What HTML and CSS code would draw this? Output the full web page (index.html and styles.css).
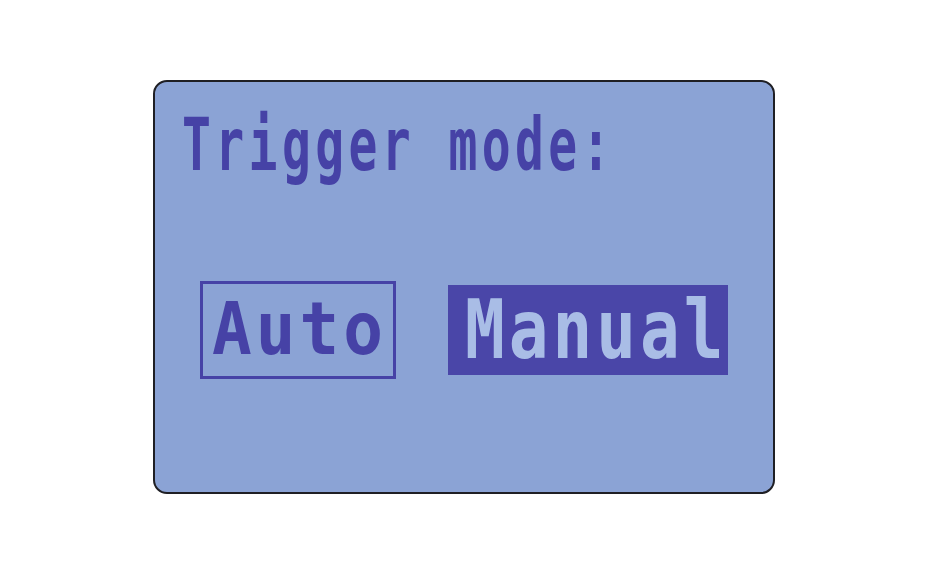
FILE: index.html
```html
<!DOCTYPE html>
<html>
<head>
<meta charset="utf-8">
<link rel="stylesheet" href="styles.css">
</head>
<body>
<div class="stage">
  <div class="lcd">
    <div class="title">Trigger mode:</div>
    <div class="options">
      <div class="opt opt-outline"><span class="opt-text">Auto</span></div>
      <div class="opt opt-selected"><span class="opt-text">Manual</span></div>
    </div>
  </div>
</div>
</body>
</html>
```

FILE: styles.css
```css
html, body {
  margin: 0;
  padding: 0;
  background: #ffffff;
}
.stage {
  width: 950px;
  height: 588px;
  padding: 80px 0 0 153px;
  box-sizing: border-box;
}
.lcd {
  width: 622px;
  height: 414px;
  box-sizing: border-box;
  border: 2px solid #1f1f24;
  border-radius: 14px;
  background: #8ba3d5;
  padding: 0 0 0 27px;
  display: flex;
  flex-direction: column;
}
.title {
  font-family: "DejaVu Sans Mono", monospace;
  font-weight: bold;
  font-size: 48px;
  line-height: 48px;
  letter-spacing: 4.4px;
  color: #4642a6;
  white-space: nowrap;
  transform: scaleY(1.52);
  transform-origin: left top;
  margin-top: 26px;
  height: 48px;
}
.options {
  display: flex;
  align-items: center;
  margin-top: 125px;
  padding-left: 18px;
  gap: 52px;
}
.opt {
  box-sizing: border-box;
  display: flex;
  align-items: center;
}
.opt-outline {
  width: 196px;
  height: 98px;
  border: 3px solid #4642a6;
  padding-left: 9px;
}
.opt-selected {
  width: 280px;
  height: 90px;
  background: #4a46a8;
  padding-left: 17px;
}
.opt-text {
  display: inline-block;
  font-family: "DejaVu Sans Mono", monospace;
  font-weight: bold;
  font-size: 66px;
  line-height: 66px;
  letter-spacing: 4px;
  white-space: nowrap;
  transform-origin: center;
}
.opt-outline .opt-text {
  color: #4642a6;
  transform: scaleY(1.1);
}
.opt-selected .opt-text {
  color: #a9bde6;
  transform: scaleY(1.25);
}
```
